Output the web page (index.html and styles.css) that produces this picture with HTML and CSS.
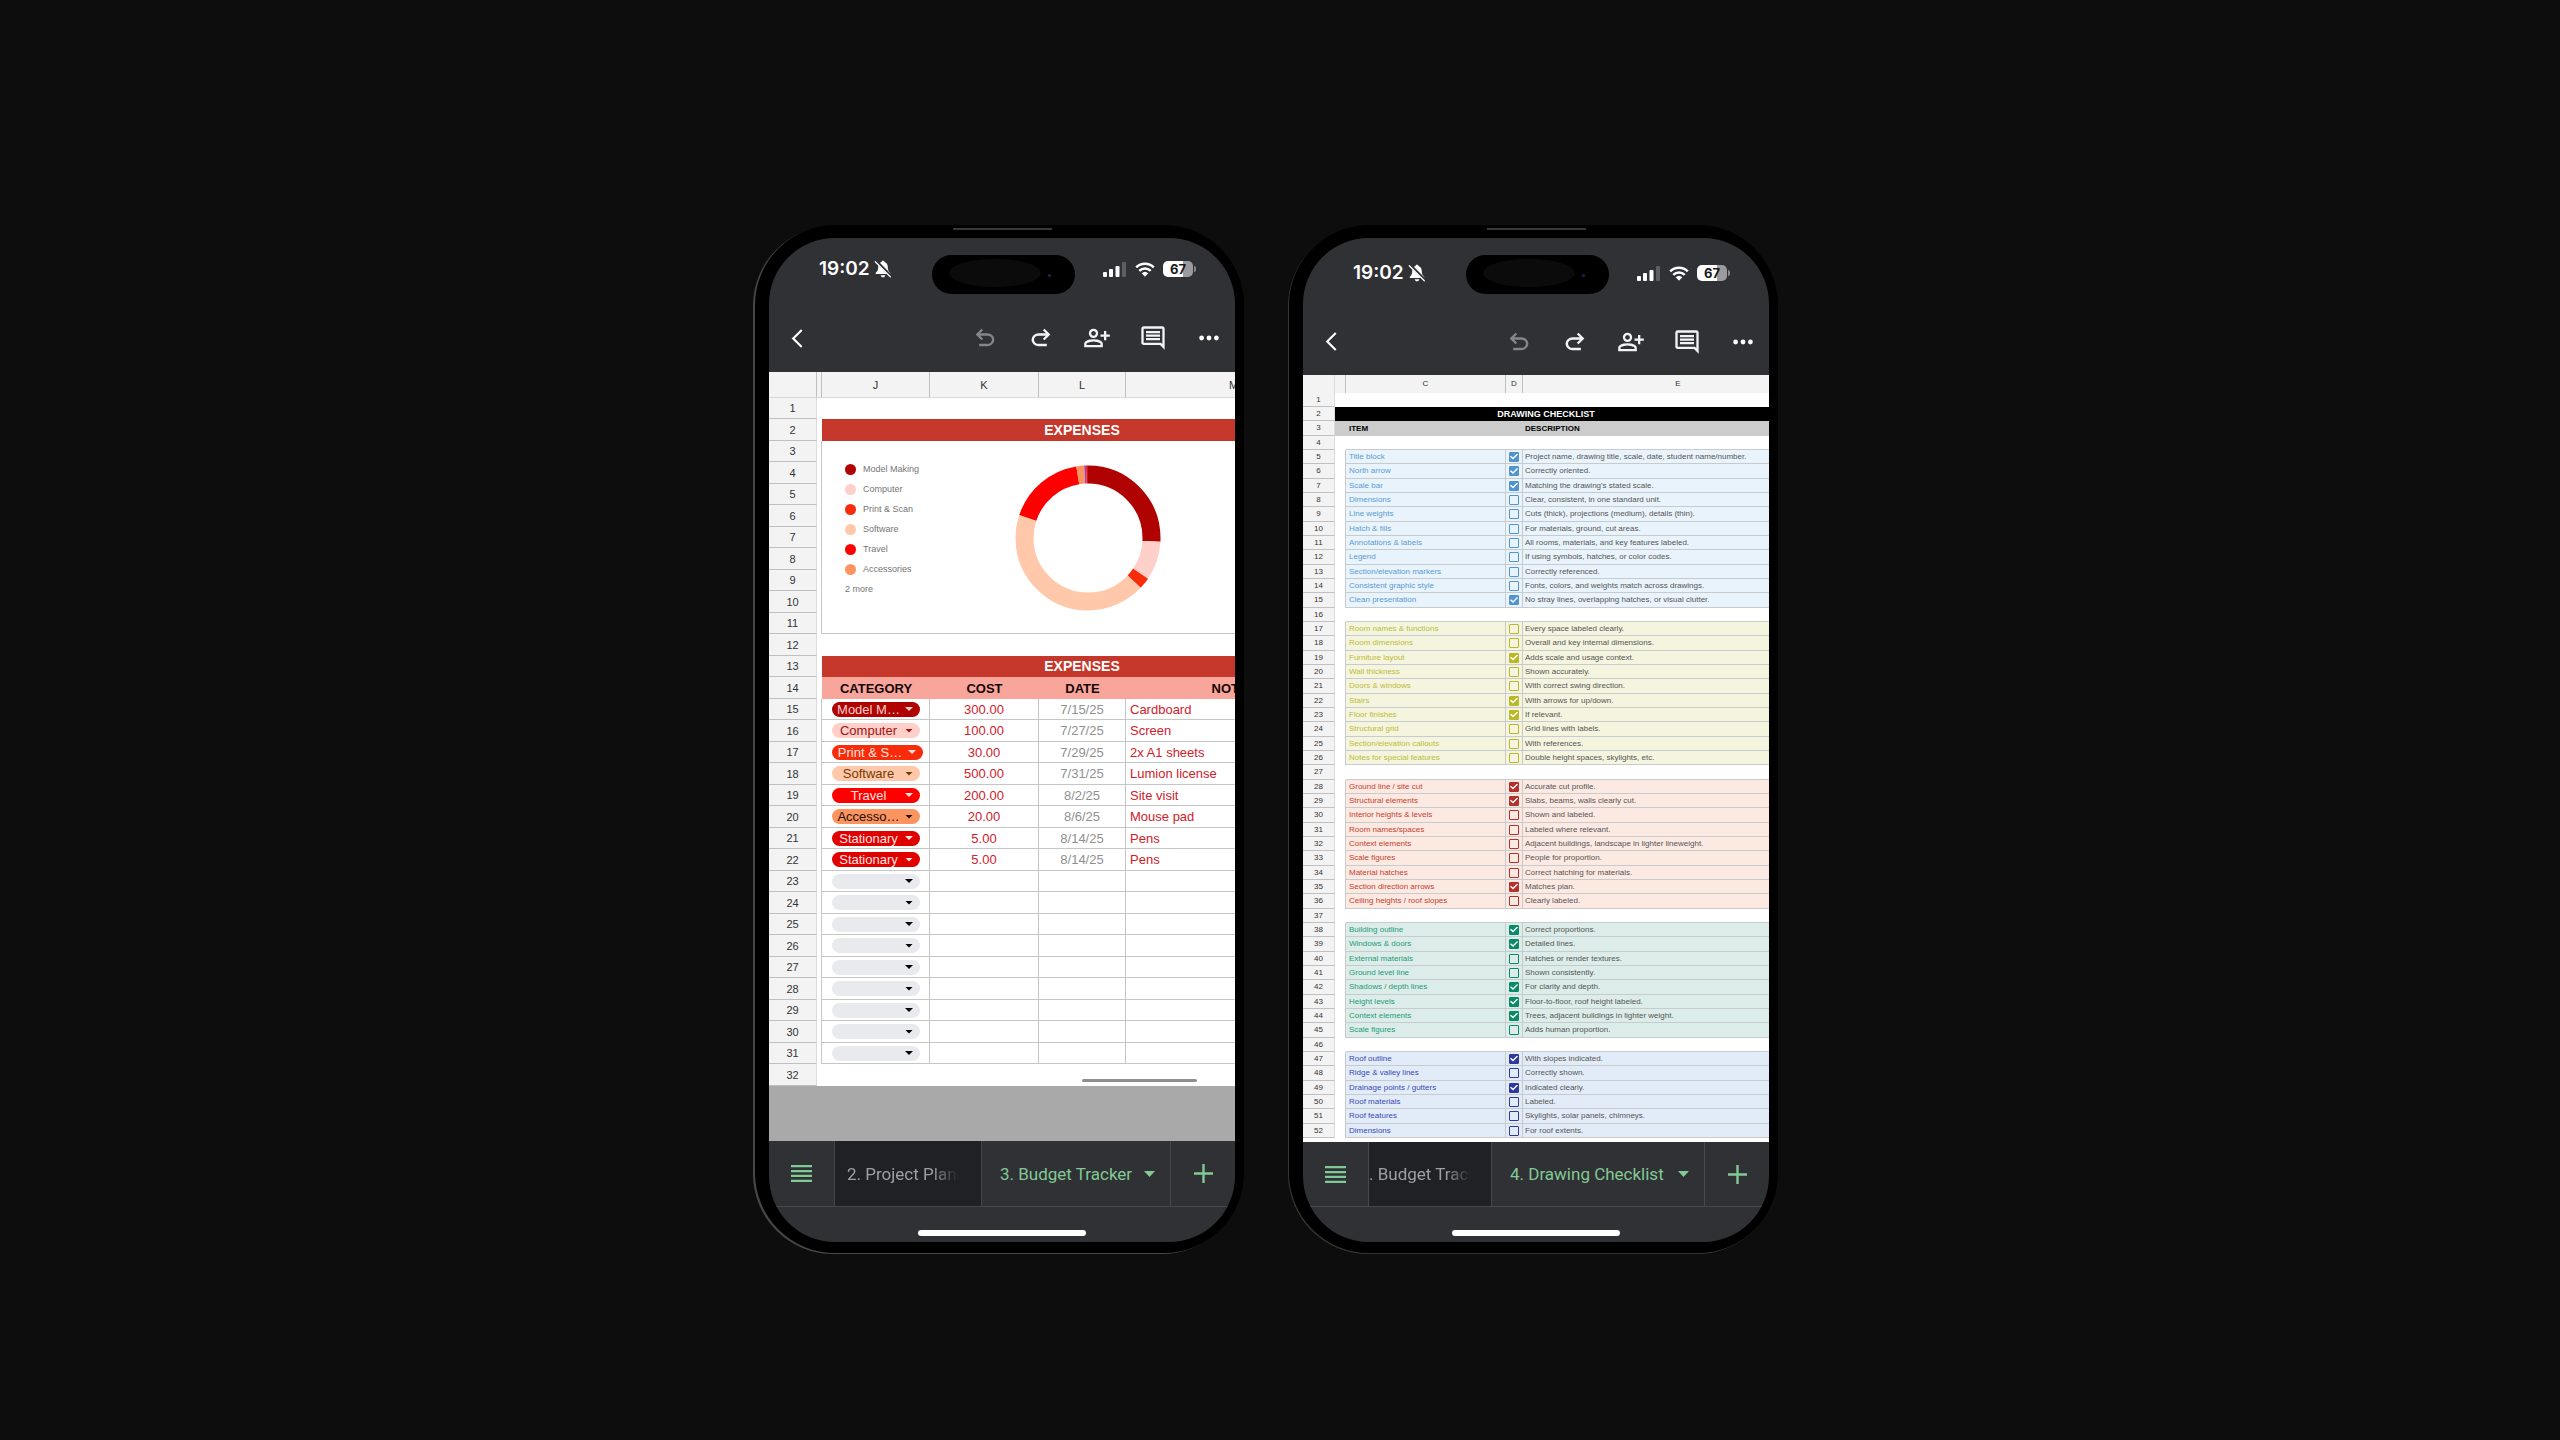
FILE: index.html
```html
<!DOCTYPE html>
<html lang="en">
<head>
<meta charset="utf-8">
<title>Budget Tracker and Drawing Checklist</title>
<link rel="stylesheet" href="styles.css">
</head>
<body>
<svg class="defs" aria-hidden="true">
  <symbol id="bell-off" viewBox="0 0 16 17"><path fill="#fff" d="M8 .6c.8 0 1.3.5 1.4 1.2 2 .6 3.100 2.300 3.100 4.500 0 2.900.7 4.200 2.100 5.500.7.700.4 1.500-.5 1.500H1.900c-.9 0-1.200-.8-.5-1.500 1.400-1.300 2.100-2.600 2.100-5.500 0-2.200 1.100-3.900 3.100-4.500C6.700 1.100 7.200.6 8 .6zM5.800 14.300h4.400c-.2 1.200-1.100 1.900-2.200 1.900s-2-.7-2.200-1.900z"/><path stroke="#303134" stroke-width="2.800" d="M1.100 .7 15.900 15.500"/><path stroke="#fff" stroke-width="1.200" stroke-linecap="round" d="M.7 1.600 14.900 15.800"/></symbol>
  <symbol id="signal" viewBox="0 0 23 15"><g fill="#fff"><rect y="10" width="4" height="5" rx="1"/><rect x="6" y="7" width="4" height="8" rx="1"/><rect x="12.500" y="4" width="4" height="11" rx="1"/></g><rect x="19" width="4" height="15" rx="1" fill="#5d5e61"/></symbol>
  <symbol id="wifi" viewBox="0 0 20 15"><g fill="none" stroke="#fff" stroke-width="2.500"><path d="M1.200 5.300a12.600 12.600 0 0 1 17.600 0"/><path d="M4.300 8.800a8.200 8.200 0 0 1 11.400 0"/></g><path fill="#fff" d="M6.700 11.200a4.800 4.800 0 0 1 6.600 0L10 14.700z"/></symbol>
  <symbol id="back" viewBox="0 0 12 20"><path fill="none" stroke="#fff" stroke-width="2.300" d="M11 1 2 10l9 9"/></symbol>
  <symbol id="undo" viewBox="0 -960 960 960"><path fill="currentColor" d="M280-200v-80h284q63 0 109.500-40T720-420q0-60-46.500-100T564-560H312l104 104-56 56-200-200 200-200 56 56-104 104h252q97 0 169.500 63T800-420q0 94-72.500 157T564-200H280Z"/></symbol>
  <symbol id="redo" viewBox="0 -960 960 960"><path fill="currentColor" d="M396-200q-97 0-169.500-63T154-420q0-94 72.500-157T396-640h252L544-744l56-56 200 200-200 200-56-56 104-104H396q-63 0-109.500 40T240-420q0 60 46.500 100T396-280h284v80H396Z"/></symbol>
  <symbol id="person-add" viewBox="0 -960 960 960"><path fill="currentColor" d="M720-400v-120H600v-80h120v-120h80v120h120v80H800v120h-80Zm-360-80q-66 0-113-47t-47-113q0-66 47-113t113-47q66 0 113 47t47 113q0 66-47 113t-113 47ZM40-160v-112q0-34 17.500-62.500T104-378q62-31 126-46.500T360-440q66 0 130 15.500T616-378q29 15 46.500 43.500T680-272v112H40Zm80-80h480v-32q0-11-5.500-20T580-306q-54-27-109-40.500T360-360q-56 0-111 13.500T140-306q-9 5-14.500 14t-5.500 20v32Zm240-320q33 0 56.500-23.500T440-640q0-33-23.500-56.500T360-720q-33 0-56.500 23.500T280-640q0 33 23.500 56.500T360-560Z"/></symbol>
  <symbol id="comment" viewBox="0 -960 960 960"><path fill="currentColor" d="M240-400h480v-80H240v80Zm0-120h480v-80H240v80Zm0-120h480v-80H240v80ZM880-80 720-240H160q-33 0-56.500-23.500T80-320v-480q0-33 23.500-56.500T160-880h640q33 0 56.500 23.500T880-800v720ZM160-320h594l46 45v-525H160v480Z"/></symbol>
  <symbol id="more" viewBox="0 0 20 6"><g fill="#fff"><circle cx="2.600" cy="3" r="2.400"/><circle cx="10" cy="3" r="2.400"/><circle cx="17.400" cy="3" r="2.400"/></g></symbol>
  <symbol id="sheets" viewBox="0 0 21 17"><path fill="#81c995" d="M0 0h21v2.300H0zM0 4.900h21v2.300H0zM0 9.800h21v2.300H0zM0 14.700h21V17H0z"/></symbol>
  <symbol id="plus" viewBox="0 0 19 19"><path fill="#81c995" d="M8.300 0h2.400v8.300H19v2.400h-8.300V19H8.300v-8.300H0V8.300h8.300z"/></symbol>
  <symbol id="caret" viewBox="0 0 11 6"><path fill="#81c995" d="M0 0h11L5.500 6z"/></symbol>
</svg>
<main class="stage">

<section class="phone" aria-label="Budget tracker">
  <div class="screen">
    <div class="island"><i class="lens"></i><i class="camera"></i></div>
    <header class="top">
      <div class="status"><span class="time">19:02</span><svg class="bell"><use href="#bell-off"/></svg><svg class="signal"><use href="#signal"/></svg><svg class="wifi"><use href="#wifi"/></svg><span class="battery">67</span></div>
      <div class="toolbar">
        <button class="back" aria-label="Back"><svg><use href="#back"/></svg></button>
        <button class="tool off" aria-label="Undo"><svg><use href="#undo"/></svg></button>
        <button class="tool" aria-label="Redo"><svg><use href="#redo"/></svg></button>
        <button class="tool" aria-label="Share"><svg><use href="#person-add"/></svg></button>
        <button class="tool" aria-label="Comments"><svg><use href="#comment"/></svg></button>
        <button class="tool dots" aria-label="More"><svg><use href="#more"/></svg></button>
      </div>
    </header>
    <div class="sheet">
      <table class="grid budget">
        <colgroup><col class="c-num"><col class="c-gap"><col class="c-j"><col class="c-k"><col class="c-l"><col class="c-m"></colgroup>
        <thead><tr><th></th><th></th><th>J</th><th>K</th><th>L</th><th>M</th></tr></thead>
        <tbody>
        <tr><th>1</th></tr>
        <tr><th>2</th><td></td><td class="title" colspan="4">EXPENSES</td></tr>
        <tr><th>3</th><td class="edge" rowspan="9"></td><td class="line" colspan="4" rowspan="9">
          <div class="chart">
            <ul class="legend">
              <li class="model">Model Making</li><li class="computer">Computer</li><li class="print">Print &amp; Scan</li><li class="software">Software</li><li class="travel">Travel</li><li class="access">Accessories</li><li class="rest">2 more</li>
            </ul>
            <svg class="donut" viewBox="0 0 146 146" role="img" aria-label="Expenses by category"><g fill="none" stroke-width="18" transform="rotate(-90 73 73)">
              <circle cx="73" cy="73" r="63.500" pathLength="1160" stroke="#b10202" stroke-dasharray="300 860"/>
              <circle cx="73" cy="73" r="63.500" pathLength="1160" stroke="#ffcfc9" stroke-dasharray="100 1060" stroke-dashoffset="-300"/>
              <circle cx="73" cy="73" r="63.500" pathLength="1160" stroke="#f82c0b" stroke-dasharray="30 1130" stroke-dashoffset="-400"/>
              <circle cx="73" cy="73" r="63.500" pathLength="1160" stroke="#ffc8aa" stroke-dasharray="500 660" stroke-dashoffset="-430"/>
              <circle cx="73" cy="73" r="63.500" pathLength="1160" stroke="#ff0000" stroke-dasharray="200 960" stroke-dashoffset="-930"/>
              <circle cx="73" cy="73" r="63.500" pathLength="1160" stroke="#fc9460" stroke-dasharray="20 1140" stroke-dashoffset="-1130"/>
              <circle cx="73" cy="73" r="63.500" pathLength="1160" stroke="#a63fb8" stroke-dasharray="5 1155" stroke-dashoffset="-1150"/>
              <circle cx="73" cy="73" r="63.500" pathLength="1160" stroke="#d4181c" stroke-dasharray="5 1155" stroke-dashoffset="-1155"/>
            </g></svg>
          </div></td></tr>
        <tr><th>4</th></tr>
        <tr><th>5</th></tr>
        <tr><th>6</th></tr>
        <tr><th>7</th></tr>
        <tr><th>8</th></tr>
        <tr><th>9</th></tr>
        <tr><th>10</th></tr>
        <tr><th>11</th></tr>
        <tr><th>12</th></tr>
        <tr><th>13</th><td></td><td class="title" colspan="4">EXPENSES</td></tr>
        <tr class="heads"><th>14</th><td></td><td>CATEGORY</td><td>COST</td><td>DATE</td><td>NOTES</td></tr>
        <tr class="item"><th>15</th><td></td><td><span class="pill model"><select aria-label="Category, row 15"><option>Model M…</option></select></span></td><td>300.00</td><td>7/15/25</td><td>Cardboard</td></tr>
        <tr class="item"><th>16</th><td></td><td><span class="pill computer"><select aria-label="Category, row 16"><option>Computer</option></select></span></td><td>100.00</td><td>7/27/25</td><td>Screen</td></tr>
        <tr class="item"><th>17</th><td></td><td><span class="pill print"><select aria-label="Category, row 17"><option>Print &amp; S…</option></select></span></td><td>30.00</td><td>7/29/25</td><td>2x A1 sheets</td></tr>
        <tr class="item"><th>18</th><td></td><td><span class="pill software"><select aria-label="Category, row 18"><option>Software</option></select></span></td><td>500.00</td><td>7/31/25</td><td>Lumion license</td></tr>
        <tr class="item"><th>19</th><td></td><td><span class="pill travel"><select aria-label="Category, row 19"><option>Travel</option></select></span></td><td>200.00</td><td>8/2/25</td><td>Site visit</td></tr>
        <tr class="item"><th>20</th><td></td><td><span class="pill access"><select aria-label="Category, row 20"><option>Accesso…</option></select></span></td><td>20.00</td><td>8/6/25</td><td>Mouse pad</td></tr>
        <tr class="item"><th>21</th><td></td><td><span class="pill stationary"><select aria-label="Category, row 21"><option>Stationary</option></select></span></td><td>5.00</td><td>8/14/25</td><td>Pens</td></tr>
        <tr class="item"><th>22</th><td></td><td><span class="pill stationary"><select aria-label="Category, row 22"><option>Stationary</option></select></span></td><td>5.00</td><td>8/14/25</td><td>Pens</td></tr>
        <tr class="item"><th>23</th><td></td><td><span class="pill"><select aria-label="Category, row 23"><option></option></select></span></td><td></td><td></td><td></td></tr>
        <tr class="item"><th>24</th><td></td><td><span class="pill"><select aria-label="Category, row 24"><option></option></select></span></td><td></td><td></td><td></td></tr>
        <tr class="item"><th>25</th><td></td><td><span class="pill"><select aria-label="Category, row 25"><option></option></select></span></td><td></td><td></td><td></td></tr>
        <tr class="item"><th>26</th><td></td><td><span class="pill"><select aria-label="Category, row 26"><option></option></select></span></td><td></td><td></td><td></td></tr>
        <tr class="item"><th>27</th><td></td><td><span class="pill"><select aria-label="Category, row 27"><option></option></select></span></td><td></td><td></td><td></td></tr>
        <tr class="item"><th>28</th><td></td><td><span class="pill"><select aria-label="Category, row 28"><option></option></select></span></td><td></td><td></td><td></td></tr>
        <tr class="item"><th>29</th><td></td><td><span class="pill"><select aria-label="Category, row 29"><option></option></select></span></td><td></td><td></td><td></td></tr>
        <tr class="item"><th>30</th><td></td><td><span class="pill"><select aria-label="Category, row 30"><option></option></select></span></td><td></td><td></td><td></td></tr>
        <tr class="item"><th>31</th><td></td><td><span class="pill"><select aria-label="Category, row 31"><option></option></select></span></td><td></td><td></td><td></td></tr>
        <tr><th>32</th></tr>
        </tbody>
      </table>
      <i class="scrollbar"></i>
    </div>
    <div class="void"></div>
    <nav class="tabs">
      <button class="all" aria-label="All sheets"><svg><use href="#sheets"/></svg></button>
      <button class="tab"><span>2. Project Planner</span></button>
      <button class="tab active"><span>3. Budget Tracker</span><svg><use href="#caret"/></svg></button>
      <button class="add" aria-label="Add sheet"><svg><use href="#plus"/></svg></button>
    </nav>
    <div class="home"><i></i></div>
  </div>
</section>

<section class="phone second" aria-label="Drawing checklist">
  <div class="screen">
    <div class="island"><i class="lens"></i><i class="camera"></i></div>
    <header class="top">
      <div class="status"><span class="time">19:02</span><svg class="bell"><use href="#bell-off"/></svg><svg class="signal"><use href="#signal"/></svg><svg class="wifi"><use href="#wifi"/></svg><span class="battery">67</span></div>
      <div class="toolbar">
        <button class="back" aria-label="Back"><svg><use href="#back"/></svg></button>
        <button class="tool off" aria-label="Undo"><svg><use href="#undo"/></svg></button>
        <button class="tool" aria-label="Redo"><svg><use href="#redo"/></svg></button>
        <button class="tool" aria-label="Share"><svg><use href="#person-add"/></svg></button>
        <button class="tool" aria-label="Comments"><svg><use href="#comment"/></svg></button>
        <button class="tool dots" aria-label="More"><svg><use href="#more"/></svg></button>
      </div>
    </header>
    <div class="sheet">
      <table class="grid check">
        <colgroup><col class="c-num"><col class="c-gap"><col class="c-c"><col class="c-d"><col class="c-e"></colgroup>
        <thead><tr><th></th><th></th><th>C</th><th>D</th><th>E</th></tr></thead>
        <tbody>
        <tr><th>1</th></tr>
        <tr class="banner"><th>2</th><td colspan="4">DRAWING CHECKLIST</td></tr>
        <tr class="heads"><th>3</th><td></td><td>ITEM</td><td></td><td>DESCRIPTION</td></tr>
        <tr class="space"><th>4</th><td></td><td colspan="3"></td></tr>
        <tr class="row sky"><th>5</th><td></td><td><label for="r5">Title block</label></td><td><input type="checkbox" id="r5" checked></td><td>Project name, drawing title, scale, date, student name/number.</td></tr>
        <tr class="row sky"><th>6</th><td></td><td><label for="r6">North arrow</label></td><td><input type="checkbox" id="r6" checked></td><td>Correctly oriented.</td></tr>
        <tr class="row sky"><th>7</th><td></td><td><label for="r7">Scale bar</label></td><td><input type="checkbox" id="r7" checked></td><td>Matching the drawing's stated scale.</td></tr>
        <tr class="row sky"><th>8</th><td></td><td><label for="r8">Dimensions</label></td><td><input type="checkbox" id="r8"></td><td>Clear, consistent, in one standard unit.</td></tr>
        <tr class="row sky"><th>9</th><td></td><td><label for="r9">Line weights</label></td><td><input type="checkbox" id="r9"></td><td>Cuts (thick), projections (medium), details (thin).</td></tr>
        <tr class="row sky"><th>10</th><td></td><td><label for="r10">Hatch &amp; fills</label></td><td><input type="checkbox" id="r10"></td><td>For materials, ground, cut areas.</td></tr>
        <tr class="row sky"><th>11</th><td></td><td><label for="r11">Annotations &amp; labels</label></td><td><input type="checkbox" id="r11"></td><td>All rooms, materials, and key features labeled.</td></tr>
        <tr class="row sky"><th>12</th><td></td><td><label for="r12">Legend</label></td><td><input type="checkbox" id="r12"></td><td>If using symbols, hatches, or color codes.</td></tr>
        <tr class="row sky"><th>13</th><td></td><td><label for="r13">Section/elevation markers</label></td><td><input type="checkbox" id="r13"></td><td>Correctly referenced.</td></tr>
        <tr class="row sky"><th>14</th><td></td><td><label for="r14">Consistent graphic style</label></td><td><input type="checkbox" id="r14"></td><td>Fonts, colors, and weights match across drawings.</td></tr>
        <tr class="row sky"><th>15</th><td></td><td><label for="r15">Clean presentation</label></td><td><input type="checkbox" id="r15" checked></td><td>No stray lines, overlapping hatches, or visual clutter.</td></tr>
        <tr class="space"><th>16</th><td></td><td colspan="3"></td></tr>
        <tr class="row olive"><th>17</th><td></td><td><label for="r17">Room names &amp; functions</label></td><td><input type="checkbox" id="r17"></td><td>Every space labeled clearly.</td></tr>
        <tr class="row olive"><th>18</th><td></td><td><label for="r18">Room dimensions</label></td><td><input type="checkbox" id="r18"></td><td>Overall and key internal dimensions.</td></tr>
        <tr class="row olive"><th>19</th><td></td><td><label for="r19">Furniture layout</label></td><td><input type="checkbox" id="r19" checked></td><td>Adds scale and usage context.</td></tr>
        <tr class="row olive"><th>20</th><td></td><td><label for="r20">Wall thickness</label></td><td><input type="checkbox" id="r20"></td><td>Shown accurately.</td></tr>
        <tr class="row olive"><th>21</th><td></td><td><label for="r21">Doors &amp; windows</label></td><td><input type="checkbox" id="r21"></td><td>With correct swing direction.</td></tr>
        <tr class="row olive"><th>22</th><td></td><td><label for="r22">Stairs</label></td><td><input type="checkbox" id="r22" checked></td><td>With arrows for up/down.</td></tr>
        <tr class="row olive"><th>23</th><td></td><td><label for="r23">Floor finishes</label></td><td><input type="checkbox" id="r23" checked></td><td>If relevant.</td></tr>
        <tr class="row olive"><th>24</th><td></td><td><label for="r24">Structural grid</label></td><td><input type="checkbox" id="r24"></td><td>Grid lines with labels.</td></tr>
        <tr class="row olive"><th>25</th><td></td><td><label for="r25">Section/elevation callouts</label></td><td><input type="checkbox" id="r25"></td><td>With references.</td></tr>
        <tr class="row olive"><th>26</th><td></td><td><label for="r26">Notes for special features</label></td><td><input type="checkbox" id="r26"></td><td>Double height spaces, skylights, etc.</td></tr>
        <tr class="space"><th>27</th><td></td><td colspan="3"></td></tr>
        <tr class="row brick"><th>28</th><td></td><td><label for="r28">Ground line / site cut</label></td><td><input type="checkbox" id="r28" checked></td><td>Accurate cut profile.</td></tr>
        <tr class="row brick"><th>29</th><td></td><td><label for="r29">Structural elements</label></td><td><input type="checkbox" id="r29" checked></td><td>Slabs, beams, walls clearly cut.</td></tr>
        <tr class="row brick"><th>30</th><td></td><td><label for="r30">Interior heights &amp; levels</label></td><td><input type="checkbox" id="r30"></td><td>Shown and labeled.</td></tr>
        <tr class="row brick"><th>31</th><td></td><td><label for="r31">Room names/spaces</label></td><td><input type="checkbox" id="r31"></td><td>Labeled where relevant.</td></tr>
        <tr class="row brick"><th>32</th><td></td><td><label for="r32">Context elements</label></td><td><input type="checkbox" id="r32"></td><td>Adjacent buildings, landscape in lighter lineweight.</td></tr>
        <tr class="row brick"><th>33</th><td></td><td><label for="r33">Scale figures</label></td><td><input type="checkbox" id="r33"></td><td>People for proportion.</td></tr>
        <tr class="row brick"><th>34</th><td></td><td><label for="r34">Material hatches</label></td><td><input type="checkbox" id="r34"></td><td>Correct hatching for materials.</td></tr>
        <tr class="row brick"><th>35</th><td></td><td><label for="r35">Section direction arrows</label></td><td><input type="checkbox" id="r35" checked></td><td>Matches plan.</td></tr>
        <tr class="row brick"><th>36</th><td></td><td><label for="r36">Ceiling heights / roof slopes</label></td><td><input type="checkbox" id="r36"></td><td>Clearly labeled.</td></tr>
        <tr class="space"><th>37</th><td></td><td colspan="3"></td></tr>
        <tr class="row teal"><th>38</th><td></td><td><label for="r38">Building outline</label></td><td><input type="checkbox" id="r38" checked></td><td>Correct proportions.</td></tr>
        <tr class="row teal"><th>39</th><td></td><td><label for="r39">Windows &amp; doors</label></td><td><input type="checkbox" id="r39" checked></td><td>Detailed lines.</td></tr>
        <tr class="row teal"><th>40</th><td></td><td><label for="r40">External materials</label></td><td><input type="checkbox" id="r40"></td><td>Hatches or render textures.</td></tr>
        <tr class="row teal"><th>41</th><td></td><td><label for="r41">Ground level line</label></td><td><input type="checkbox" id="r41"></td><td>Shown consistently.</td></tr>
        <tr class="row teal"><th>42</th><td></td><td><label for="r42">Shadows / depth lines</label></td><td><input type="checkbox" id="r42" checked></td><td>For clarity and depth.</td></tr>
        <tr class="row teal"><th>43</th><td></td><td><label for="r43">Height levels</label></td><td><input type="checkbox" id="r43" checked></td><td>Floor-to-floor, roof height labeled.</td></tr>
        <tr class="row teal"><th>44</th><td></td><td><label for="r44">Context elements</label></td><td><input type="checkbox" id="r44" checked></td><td>Trees, adjacent buildings in lighter weight.</td></tr>
        <tr class="row teal"><th>45</th><td></td><td><label for="r45">Scale figures</label></td><td><input type="checkbox" id="r45"></td><td>Adds human proportion.</td></tr>
        <tr class="space"><th>46</th><td></td><td colspan="3"></td></tr>
        <tr class="row indigo"><th>47</th><td></td><td><label for="r47">Roof outline</label></td><td><input type="checkbox" id="r47" checked></td><td>With slopes indicated.</td></tr>
        <tr class="row indigo"><th>48</th><td></td><td><label for="r48">Ridge &amp; valley lines</label></td><td><input type="checkbox" id="r48"></td><td>Correctly shown.</td></tr>
        <tr class="row indigo"><th>49</th><td></td><td><label for="r49">Drainage points / gutters</label></td><td><input type="checkbox" id="r49" checked></td><td>Indicated clearly.</td></tr>
        <tr class="row indigo"><th>50</th><td></td><td><label for="r50">Roof materials</label></td><td><input type="checkbox" id="r50"></td><td>Labeled.</td></tr>
        <tr class="row indigo"><th>51</th><td></td><td><label for="r51">Roof features</label></td><td><input type="checkbox" id="r51"></td><td>Skylights, solar panels, chimneys.</td></tr>
        <tr class="row indigo"><th>52</th><td></td><td><label for="r52">Dimensions</label></td><td><input type="checkbox" id="r52"></td><td>For roof extents.</td></tr>
        </tbody>
      </table>
    </div>
    <nav class="tabs">
      <button class="all" aria-label="All sheets"><svg><use href="#sheets"/></svg></button>
      <button class="tab"><span>. Budget Tracker</span></button>
      <button class="tab active"><span>4. Drawing Checklist</span><svg><use href="#caret"/></svg></button>
      <button class="add" aria-label="Add sheet"><svg><use href="#plus"/></svg></button>
    </nav>
    <div class="home"><i></i></div>
  </div>
</section>

</main>
</body>
</html>
```
FILE: styles.css
```css
* { box-sizing: border-box; }
body {
  margin: 0;
  background: #0d0d0d;
  font-family: "Liberation Sans", Arial, sans-serif;
}
button, select { margin: 0; padding: 0; border: 0; background: none; color: inherit; font: inherit; }
i { display: block; }
svg { display: block; }
.defs { position: absolute; width: 0; height: 0; }

.stage {
  display: flex;
  flex-wrap: wrap;
  justify-content: center;
  align-content: center;
  gap: 45px;
  min-height: 100vh;
  padding: 38px 27px 0 0;
}

/* Device frame */
.phone {
  position: relative;
  padding: 13px 9px 11px 14px;
  border-radius: 80px;
  background: #000;
  box-shadow: -2px 1px 0 #4a4643;
}
.phone.second { box-shadow: -1px 1px 0 #3a3430; }
.phone::before {
  content: "";
  position: absolute;
  top: 3px;
  left: 198px;
  width: 99px;
  height: 2px;
  background: #383838;
}
.screen {
  position: relative;
  display: flex;
  flex-direction: column;
  width: 466px;
  min-height: 1004px;
  border-radius: 66px;
  background: #303134;
  overflow: hidden;
}
.island {
  position: absolute;
  top: 17px;
  left: 163px;
  width: 143px;
  height: 39px;
  border-radius: 20px;
  background: #000;
}
.lens {
  position: absolute;
  top: 4px;
  left: 17px;
  width: 92px;
  height: 28px;
  border-radius: 50%;
  background: #0b0b0b;
}
.camera {
  position: absolute;
  top: 19px;
  left: 116px;
  width: 3px;
  height: 3px;
  border-radius: 50%;
  background: #23235c;
}

/* Status bar and toolbar */
.second .top { padding-top: 4px; }
.status {
  display: flex;
  align-items: center;
  height: 62px;
  padding: 0 42px 0 50px;
}
.time { font: 600 19px/24px Inter, sans-serif; color: #fff; }
.bell { width: 18px; height: 18px; margin-left: 4px; }
.signal { width: 23px; height: 15px; margin-left: auto; }
.wifi { width: 20px; height: 15px; margin: 0 8px 0 9px; }
.battery {
  position: relative;
  width: 30px;
  height: 16px;
  border-radius: 5px;
  background: linear-gradient(90deg, #fff 67%, #9b9b9d 67%);
  font: 700 13px/16px Inter, sans-serif;
  text-align: center;
  color: #1b1b1d;
}
.battery::after {
  content: "";
  position: absolute;
  top: 5px;
  left: 31px;
  width: 2px;
  height: 6px;
  border-radius: 0 2px 2px 0;
  background: #8a8a8d;
}
.toolbar { display: flex; align-items: center; height: 72px; margin-right: -2px; padding-top: 4px; }
.second .toolbar { height: 71px; }
.back { margin: 0 auto 0 22px; }
.back svg { width: 12px; height: 19px; }
.tool { display: flex; justify-content: center; width: 56px; color: #f1f3f4; }
.tool svg { width: 28px; height: 28px; }
.dots svg { width: 20px; height: 6px; }
.off { color: #85868a; }

/* Spreadsheet */
.sheet { position: relative; background: #fff; overflow: hidden; }
.second .sheet { flex: 1; }
.grid { table-layout: fixed; border-spacing: 0; }
.grid th, .grid td { padding: 0; overflow: hidden; white-space: nowrap; font-weight: 400; }
.grid th { border: 0 solid #c0c0c0; border-bottom-width: 1px; background: #f3f3f3; color: #333; }
.grid tbody th { border-right: 1px solid #dcdcdc; }

.budget { width: 573px; font-size: 13px; line-height: 15px; }
.budget .c-num { width: 48px; }
.budget .c-gap { width: 5px; }
.budget .c-j { width: 108px; }
.budget .c-k { width: 109px; }
.budget .c-l { width: 87px; }
.budget .c-m { width: 216px; }
.budget th { font-size: 11px; line-height: 12px; }
.budget thead tr { height: 26px; }
.budget thead th { border-right-width: 1px; border-bottom-color: #d8d8d8; }
.budget tbody tr { height: 22px; }
.budget tbody tr:nth-child(odd) { height: 21px; }
.budget .title { background: #c5372a; color: #fff; font-size: 14px; font-weight: 700; text-align: center; }
.budget .heads td:nth-child(n+3) { background: #f8a59b; color: #150505; font-weight: 700; text-align: center; }
.budget .edge, .budget .item td { border-right: 1px solid #c6c6c6; }
.budget .line, .budget .item td:nth-child(n+3) { border-bottom: 1px solid #c6c6c6; }
.budget .line { vertical-align: top; }
.item td { text-align: center; color: #d1202a; }
.item td:nth-child(5) { color: #909090; }
.grid.budget .item td:nth-child(6) { padding-left: 4px; text-align: left; }

.chart { display: flex; align-items: flex-start; height: 160px; padding: 18px 0 0 23px; }
.legend { width: 170px; margin: 0; padding: 0; list-style: none; font-size: 9px; line-height: 20px; color: #757575; }
.legend li { display: flex; align-items: center; gap: 7px; }
.legend li::before { content: ""; width: 11px; height: 11px; border-radius: 50%; background: var(--tone); }
.legend .rest::before { display: none; }
.donut { width: 146px; height: 146px; margin-top: 6px; }

.model { --tone: #b10202; --ink: #ffcfc9; }
.computer { --tone: #ffcfc9; --ink: #9c1414; }
.print { --tone: #f82c0b; --ink: #ffe5de; }
.software { --tone: #ffc8aa; --ink: #753800; }
.travel { --tone: #ff0000; --ink: #ffe5e0; }
.access { --tone: #fc9460; --ink: #1c0d05; }
.stationary { --tone: #e00000; --ink: #ffe5e0; }
.pill {
  display: flex;
  align-items: center;
  width: 88px;
  height: 15px;
  margin-left: 10px;
  padding-right: 7px;
  border-radius: 8px;
  background: var(--tone, #e8eaed);
  color: var(--ink, #000);
}
.pill.print { width: 91px; }
.pill select {
  flex: 1;
  min-width: 0;
  height: 15px;
  appearance: none;
  line-height: 15px;
  text-align: center;
  text-align-last: center;
}
.pill::after {
  content: "";
  width: 8px;
  height: 4px;
  background: currentColor;
  clip-path: polygon(0 0, 100% 0, 50% 100%);
}
.scrollbar {
  position: absolute;
  right: 38px;
  bottom: 4px;
  width: 115px;
  height: 3px;
  border-radius: 2px;
  background: #8f8f8f;
}
.void { flex: 1; background: #a9a9a9; }

.check { width: 531px; font-size: 8px; line-height: 10px; color: #555; }
.check .c-num { width: 32px; }
.check .c-gap { width: 11px; }
.check .c-c { width: 160px; }
.check .c-d { width: 17px; }
.check .c-e { width: 311px; }
.check thead tr { height: 18px; }
.check thead th { border-right-width: 1px; border-bottom-width: 0; }
.check thead th:first-child { border-right-color: #dcdcdc; }
.check tbody tr { height: 14px; }
.check tbody tr:nth-child(3n) { height: 15px; }
.grid .banner td { padding-right: 77px; background: #000; color: #fff; font-size: 9px; font-weight: 700; text-align: center; }
.grid.check .heads td { background: #ccc; color: #000; font-weight: 700; }
.check .heads td:nth-child(n+3), .check .row td:nth-child(n+3) { padding-left: 3px; }
.space td:nth-child(3), .row td:nth-child(n+3) { border-bottom: 1px solid #c8cbce; }
.row td { border-right: 1px solid #c8cbce; }
.row td:nth-child(n+3) { background: var(--fill); }
.check .heads td:nth-child(5), .check .row td:nth-child(5) { padding-left: 2px; }
.row label { display: block; color: var(--ink); }
.sky { --fill: #e9f3fb; --ink: #5b9bd3; --box: #5294cd; }
.olive { --fill: #f4f4df; --ink: #bcbc38; --box: #b9b92a; }
.brick { --fill: #fce9e2; --ink: #c5402f; --box: #b5302a; }
.teal { --fill: #dcece8; --ink: #269a78; --box: #0b8a6a; }
.indigo { --fill: #e2ecf8; --ink: #3a48b4; --box: #2f3aa0; }
.row input {
  display: grid;
  place-items: center;
  width: 10px;
  height: 10px;
  margin: 0;
  appearance: none;
  border: 1px solid var(--box);
  border-radius: 1px;
}
.row input:checked { background: var(--box); }
.row input:checked::before {
  content: "";
  width: 8px;
  height: 6px;
  background: #fff;
  clip-path: polygon(0 55%, 12% 38%, 38% 66%, 88% 0, 100% 16%, 38% 100%);
}

/* Sheet tabs */
.tabs { display: flex; height: 66px; border-bottom: 1px solid #47484b; }
.second .tabs { height: 65px; }
.tabs button { display: flex; align-items: center; justify-content: center; border-right: 1px solid #47484b; }
.tabs .all { width: 66px; }
.all svg { width: 21px; height: 17px; }
.tabs .add { width: 64px; border: 0; }
.add svg { width: 19px; height: 19px; }
.tabs .tab {
  justify-content: flex-start;
  width: 147px;
  padding: 0 22px 0 12px;
  background: #202124;
  font: 400 17px/20px Roboto, sans-serif;
  color: #9aa0a6;
}
.second .tabs .tab { width: 123px; padding: 0 20px 0 0; }
.tab span { flex: 1; min-width: 0; overflow: hidden; white-space: nowrap; text-align: left; mask-image: linear-gradient(90deg, #000 75%, transparent); }
.tabs .active, .second .tabs .active { flex: 1; padding: 0 15px 0 18px; background: none; color: #81c995; }
.active span { mask-image: none; }
.active svg { width: 11px; height: 6px; }
.home { display: flex; justify-content: center; height: 35px; padding-top: 23px; }
.home i { width: 168px; height: 6px; border-radius: 3px; background: #fff; }
```
